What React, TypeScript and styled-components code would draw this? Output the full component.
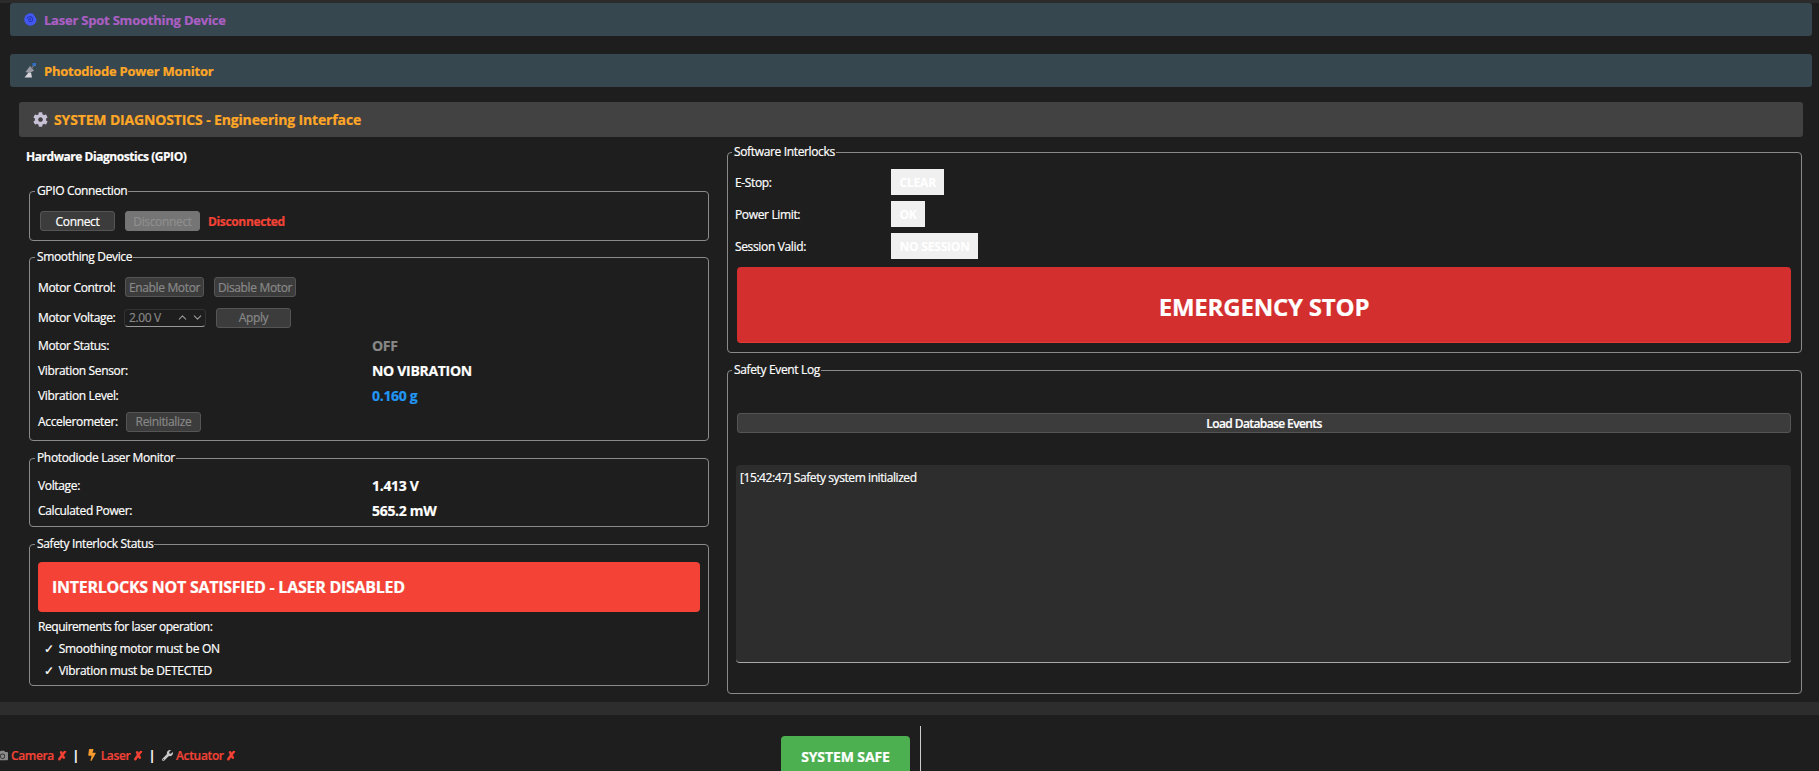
import styled, { createGlobalStyle } from "styled-components";
import { ChevronUp, ChevronDown } from "lucide-react";
import { FaCog, FaBolt, FaWrench, FaCamera } from "react-icons/fa";

const GlobalStyle = createGlobalStyle`
  html, body {
    margin: 0;
    padding: 0;
    background: #1e1e1e;
  }
  * {
    box-sizing: border-box;
  }
  body {
    font-family: "Open Sans", "Noto Sans", sans-serif;
    font-size: 12px;
    font-weight: 500;
    letter-spacing: -0.35px;
    -webkit-text-stroke: 0.2px;
    color: #fff;
  }
`;

const Page = styled.div`
  display: flex;
  flex-direction: column;
  height: 771px;
  overflow: hidden;
  background: #1e1e1e;
  border-top: 3px solid #2b2b2b;
`;

const Collapsed = styled.div<{ $color: string; $gap?: number }>`
  display: flex;
  align-items: center;
  flex: none;
  gap: 7px;
  height: 33px;
  margin: ${(p) => p.$gap ?? 0}px 7px 0 10px;
  padding-left: 14px;
  background: #37474f;
  border-radius: 3px;
  color: ${(p) => p.$color};
  font-size: 13px;
  font-weight: 700;
  letter-spacing: -0.22px;
`;

const DiagHeader = styled.div`
  display: flex;
  align-items: center;
  flex: none;
  gap: 6px;
  height: 35px;
  margin: 15px 16px 0 19px;
  padding-left: 14px;
  background: #424242;
  border-radius: 3px;
  color: #ffa726;
  font-size: 14px;
  font-weight: 700;
  letter-spacing: -0.15px;
`;

const Columns = styled.div`
  display: grid;
  flex: 1;
  grid-template-columns: 683px 1075px;
  column-gap: 18px;
  min-height: 0;
  padding-left: 26px;
`;

const LeftColumn = styled.div`
  display: flex;
  flex-direction: column;
  padding-top: 12px;
`;

const RightColumn = styled.div`
  display: flex;
  flex-direction: column;
  gap: 9px;
  padding-top: 7px;
`;

const ColumnTitle = styled.div`
  height: 16px;
  margin-bottom: 18px;
  font-weight: 700;
  letter-spacing: -0.45px;
  line-height: 16px;
`;

const Group = styled.fieldset<{ $height: number; $mt?: number; $ml?: number; $pt?: number }>`
  display: block;
  height: ${(p) => p.$height}px;
  min-width: 0;
  margin: ${(p) => p.$mt ?? 0}px 0 0 ${(p) => p.$ml ?? 0}px;
  padding: ${(p) => p.$pt ?? 0}px 8px 0 7px;
  border: 1px solid #8a8a8a;
  border-radius: 4px;
`;

const RightGroup = styled(Group)`
  padding-left: 6px;
`;

const GroupTitle = styled.legend`
  height: 16px;
  margin-left: -2px;
  padding: 0 1px 0 2px;
  color: #fff;
  line-height: 16px;
`;

const Row = styled.div<{ $height?: number }>`
  display: flex;
  align-items: center;
  height: ${(p) => p.$height ?? 25}px;
`;

const ConnectRow = styled(Row)`
  gap: 10px;
  padding-left: 3px;
`;

const RowLabel = styled.span<{ $width?: number }>`
  flex: none;
  padding-left: 1px;
  width: ${(p) => (p.$width ? `${p.$width}px` : "auto")};
`;

const Value = styled.span<{ $color?: string }>`
  color: ${(p) => p.$color ?? "#fff"};
  font-size: 14px;
  font-weight: 700;
  letter-spacing: -0.3px;
`;

const Button = styled.div<{ $width: number; $dim?: boolean; $ml?: number }>`
  display: flex;
  align-items: center;
  justify-content: center;
  flex: none;
  width: ${(p) => p.$width}px;
  height: 20px;
  margin-left: ${(p) => p.$ml ?? 0}px;
  background: #3c3c3c;
  border: 1px solid #555;
  border-radius: 3px;
  color: ${(p) => (p.$dim ? "#888" : "#fff")};
`;

const DisabledButton = styled(Button)`
  background: #757575;
  border-color: #757575;
  color: #8f8f8f;
`;

const StatusText = styled.span`
  margin-left: -2px;
  color: #f44336;
  font-weight: 700;
`;

const SpinBox = styled.div`
  display: flex;
  align-items: center;
  flex: none;
  width: 82px;
  height: 18px;
  margin-left: -2px;
  padding: 0 1px 0 4px;
  border: 1px solid #333;
  border-bottom-color: #999;
  border-radius: 4px;
  color: #888;
`;

const SpinValue = styled.span`
  flex: 1;
`;

const SpinArrows = styled.span`
  display: flex;
  gap: 2px;
  color: #999;
`;

const Banner = styled.div`
  display: flex;
  align-items: center;
  height: 50px;
  margin-top: 10px;
  margin-left: 1px;
  padding-left: 14px;
  background: #f44336;
  border-radius: 4px;
  font-size: 16px;
  font-weight: 700;
  letter-spacing: -0.26px;
`;

const Requirement = styled.div<{ $indent?: boolean; $mt?: number }>`
  height: 22px;
  margin-top: ${(p) => p.$mt ?? 0}px;
  padding-left: ${(p) => (p.$indent ? 7 : 1)}px;
  letter-spacing: ${(p) => (p.$indent ? -0.3 : -0.45)}px;
  line-height: 22px;
`;

const Check = styled.span`
  margin-right: 5px;
`;

const Badge = styled.span`
  display: flex;
  align-items: center;
  height: 26px;
  padding: 0 8.5px;
  background: #f0f0f0;
  color: #fff;
  font-weight: 700;
  letter-spacing: -0.2px;
`;

const EmergencyStop = styled.div`
  display: flex;
  align-items: center;
  justify-content: center;
  height: 76px;
  margin: 5px 2px 0 3px;
  padding-top: 3px;
  background: #d32f2f;
  border-bottom: 1px solid #e53935;
  border-radius: 4px;
  font-size: 24px;
  font-weight: 700;
  letter-spacing: -0.2px;
`;

const LoadButton = styled(Button)`
  width: auto;
  margin: 35px 2px 0 3px;
  font-weight: 600;
  letter-spacing: -0.6px;
`;

const LogBox = styled.div`
  height: 198px;
  margin: 32px 2px 0 2px;
  padding: 5px 4px;
  background: #2d2d2d;
  border-bottom: 1px solid #aaa;
  border-radius: 4px;
  letter-spacing: -0.42px;
  line-height: 16px;
`;

const Strip = styled.div`
  flex: none;
  height: 13px;
  background: #2d2d2d;
`;

const StatusBar = styled.div`
  display: flex;
  flex: none;
  height: 56px;
  align-items: flex-start;
`;

const SystemStatus = styled.div`
  display: flex;
  align-items: center;
  flex: none;
  width: 778px;
  height: 16px;
  margin-top: 32px;
  margin-left: -3px;
  color: #f44336;
  font-weight: 600;
`;

const Device = styled.span`
  display: flex;
  align-items: center;
  gap: 3px;
`;

const Separator = styled.span`
  margin: 0 7px 0 6px;
  color: #fff;
  font-weight: 700;
`;

const SafeButton = styled.div`
  display: flex;
  align-items: center;
  justify-content: center;
  flex: none;
  width: 129px;
  height: 40px;
  margin-top: 21px;
  margin-left: 6px;
  background: #4caf50;
  border-radius: 4px;
  font-size: 14px;
  font-weight: 700;
  letter-spacing: -0.1px;
`;

const Divider = styled.div`
  flex: none;
  width: 1px;
  height: 50px;
  margin: 11px 0 0 10px;
  background: #ccc;
`;

function SpiralIcon() {
  return (
    <svg width="13" height="13" viewBox="0 0 15 15" fill="none">
      <path
        d="M7.500.4A7.100 7.100 0 1 0 14.400 6.800L11.500 2.500 11.800 1.900A7 7 0 0 0 7.500.4Z"
        fill="#4358f0"
      />
      <path
        d="M7.500 7.800c.8-.8-.4-1.800-1.500-1-1.300 1-.6 3.200 1.300 3.300 2.300.1 3.600-2.600 2.200-4.600C8 3.600 5 3.800 3.500 6"
        stroke="#2536b8"
        strokeWidth="1.2"
        strokeLinecap="round"
      />
    </svg>
  );
}

function DishIcon() {
  return (
    <svg width="13" height="15" viewBox="0 0 13 15">
      <path d="M1.500 9 L6 3 L10 7.500 Q7 10.500 1.500 9Z" fill="#9a9aa4" />
      <path d="M4.500 9.500 L0.500 14.500 H8 L7 9.500Z" fill="#d8d4dc" />
      <rect x="8.500" y="0" width="3.500" height="3" fill="#2f6fc4" />
      <path d="M7 6 L10 2.500" stroke="#8a8a90" strokeWidth="1" />
    </svg>
  );
}

export default function App() {
  return (
    <>
      <GlobalStyle />
      <Page>
        <Collapsed $color="#ab5fc4">
          <SpiralIcon />
          Laser Spot Smoothing Device
        </Collapsed>
        <Collapsed $color="#ffa726" $gap={18}>
          <DishIcon />
          Photodiode Power Monitor
        </Collapsed>
        <DiagHeader>
          <FaCog size={15} color="#c9c2d6" />
          SYSTEM DIAGNOSTICS - Engineering Interface
        </DiagHeader>
        <Columns>
          <LeftColumn>
            <ColumnTitle>Hardware Diagnostics (GPIO)</ColumnTitle>
            <Group $height={58} $ml={3} $pt={7}>
              <GroupTitle>GPIO Connection</GroupTitle>
              <ConnectRow $height={30}>
                <Button $width={75}>Connect</Button>
                <DisabledButton $width={75}>Disconnect</DisabledButton>
                <StatusText>Disconnected</StatusText>
              </ConnectRow>
            </Group>
            <Group $height={192} $mt={8} $ml={3} $pt={7}>
              <GroupTitle>Smoothing Device</GroupTitle>
              <Row $height={30}>
                <RowLabel $width={88}>Motor Control:</RowLabel>
                <Button $width={79} $dim>Enable Motor</Button>
                <Button $width={82} $dim $ml={10}>Disable Motor</Button>
              </Row>
              <Row $height={31}>
                <RowLabel $width={89}>Motor Voltage:</RowLabel>
                <SpinBox>
                  <SpinValue>2.00 V</SpinValue>
                  <SpinArrows>
                    <ChevronUp size={13} />
                    <ChevronDown size={13} />
                  </SpinArrows>
                </SpinBox>
                <Button $width={75} $dim $ml={10}>Apply</Button>
              </Row>
              <Row>
                <RowLabel $width={335}>Motor Status:</RowLabel>
                <Value $color="#888">OFF</Value>
              </Row>
              <Row>
                <RowLabel $width={335}>Vibration Sensor:</RowLabel>
                <Value>NO VIBRATION</Value>
              </Row>
              <Row>
                <RowLabel $width={335}>Vibration Level:</RowLabel>
                <Value $color="#2196f3">0.160 g</Value>
              </Row>
              <Row $height={27}>
                <RowLabel $width={89}>Accelerometer:</RowLabel>
                <Button $width={75} $dim>Reinitialize</Button>
              </Row>
            </Group>
            <Group $height={77} $mt={9} $ml={3} $pt={7}>
              <GroupTitle>Photodiode Laser Monitor</GroupTitle>
              <Row>
                <RowLabel $width={335}>Voltage:</RowLabel>
                <Value>1.413 V</Value>
              </Row>
              <Row>
                <RowLabel $width={335}>Calculated Power:</RowLabel>
                <Value>565.2 mW</Value>
              </Row>
            </Group>
            <Group $height={150} $mt={9} $ml={3}>
              <GroupTitle>Safety Interlock Status</GroupTitle>
              <Banner>INTERLOCKS NOT SATISFIED - LASER DISABLED</Banner>
              <Requirement $mt={4}>Requirements for laser operation:</Requirement>
              <Requirement $indent><Check>✓</Check>Smoothing motor must be ON</Requirement>
              <Requirement $indent><Check>✓</Check>Vibration must be DETECTED</Requirement>
            </Group>
          </LeftColumn>
          <RightColumn>
            <RightGroup $height={209} $pt={6}>
              <GroupTitle>Software Interlocks</GroupTitle>
              <Row $height={32}>
                <RowLabel $width={157}>E-Stop:</RowLabel>
                <Badge>CLEAR</Badge>
              </Row>
              <Row $height={32}>
                <RowLabel $width={157}>Power Limit:</RowLabel>
                <Badge>OK</Badge>
              </Row>
              <Row $height={32}>
                <RowLabel $width={157}>Session Valid:</RowLabel>
                <Badge>NO SESSION</Badge>
              </Row>
              <EmergencyStop>EMERGENCY STOP</EmergencyStop>
            </RightGroup>
            <RightGroup $height={332}>
              <GroupTitle>Safety Event Log</GroupTitle>
              <LoadButton $width={0}>Load Database Events</LoadButton>
              <LogBox>[15:42:47] Safety system initialized</LogBox>
            </RightGroup>
          </RightColumn>
        </Columns>
        <Strip />
        <StatusBar>
          <SystemStatus>
            <Device>
              <FaCamera size={11} color="#8a8a8a" />
              Camera ✗
            </Device>
            <Separator>|</Separator>
            <Device>
              <FaBolt size={12} color="#f59a2e" />
              Laser ✗
            </Device>
            <Separator>|</Separator>
            <Device>
              <FaWrench size={11} color="#c8c8c8" />
              Actuator ✗
            </Device>
          </SystemStatus>
          <SafeButton>SYSTEM SAFE</SafeButton>
          <Divider />
        </StatusBar>
      </Page>
    </>
  );
}
